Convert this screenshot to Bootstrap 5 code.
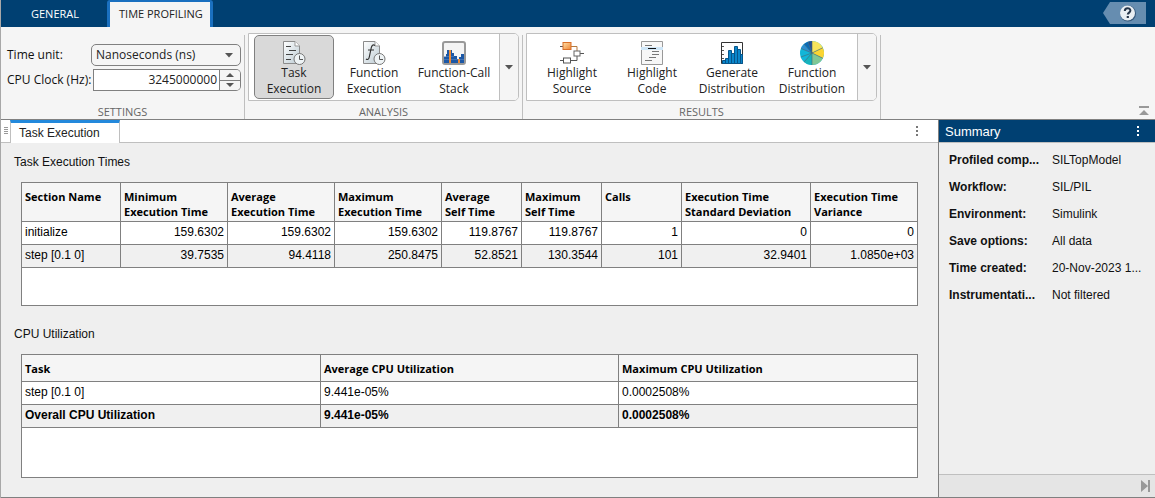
<!DOCTYPE html>
<html lang="en">
<head>
<meta charset="utf-8">
<meta name="viewport" content="width=device-width, initial-scale=1">
<title>Code Profile Analyzer</title>
<link rel="stylesheet" href="https://cdn.jsdelivr.net/npm/bootstrap@5.3.0/dist/css/bootstrap.min.css">
<style>
:root{--navy:#004072;--line:#808080;--soft:#bfbfbf;--ui:"Open Sans","Noto Sans",sans-serif;--doc:"Liberation Sans",Arial,sans-serif}
body{font:12px/16px var(--doc);color:#111;background:#efefef;border-left:1px solid #a8a8a8}
button{color:inherit}
.tabstrip{background:var(--navy);height:27px;font-family:var(--ui);font-size:11px}
.tabstrip .nav-link{color:#fff;padding:0 28px 0 30px;line-height:26px;border:0;border-radius:0}
.tabstrip .nav-link.active{background:#f5f5f5;color:#222;border:solid #1a70c0;border-width:2px 3px 0;padding:0 7px 0 9px;line-height:24px;height:27px;border-radius:3px 3px 0 0}
.ribbon{background:#f5f5f5;border-bottom:1px solid var(--line);font-family:var(--ui);font-size:12px}
.ribbon-group{border-right:1px solid var(--soft);margin-top:8px;height:84px}
.group-title{color:#666;font-size:11px;line-height:14px}
.settings{width:244px}
.settings label{width:84px;font-size:12px}
.settings-rows{padding:9px 3px 0 6px;gap:3px}
.unit{height:22px;border:1px solid var(--line);border-radius:5px;background:#f5f5f5;padding:0 4px;font-size:12px;line-height:20px;color:#222;appearance:none;width:100%}
.unit-wrap{width:150px;position:relative}
.unit-wrap svg{position:absolute;right:8px;top:9px;pointer-events:none}
.clock-wrap{width:148px;height:22px}
.clock{border:1px solid var(--line);padding:0 2px;text-align:right;font-size:12px;line-height:20px;color:#222;min-width:0;width:0;background:#fff}
.spin{width:21px;border:1px solid var(--line);border-left:0;border-radius:0 5px 5px 0;overflow:hidden}
.spin button{background:#f5f5f5;border:0;padding:0;flex:1 1 0;line-height:0}
.spin button+button{border-top:1px solid var(--line)}
.gallery{border:1px solid var(--soft);border-radius:0 5px 5px 0;background:#fff;height:68px;margin:-2px 3px 0;overflow:hidden}
.gallery-items{padding:1px 5px}
.tool{width:80px;border:1px solid transparent;border-radius:5px;background:none;padding:4px 0 0;line-height:16px;height:64px;color:#222}
.tool.pressed{background:#d9d9d9;border-color:var(--line)}
.tool svg{display:block;margin:0 auto}
.more{width:19px;border:0;border-left:1px solid var(--soft);background:#f5f5f5;padding:0}
.icon-btn{border:0;background:none;padding:0;line-height:0}
.doc-tabs{height:23px;background:#fff;border-bottom:1px solid var(--soft)}
.grip{width:9px}
.doc-tab{width:110px;border:0;border-right:1px solid var(--soft);border-left:1px solid var(--soft);border-top:3px solid #2389dc;background:#fff;text-align:left;padding:0 0 0 8px;height:23px;color:#222;line-height:19px}
.pane{padding:0 20px 19px 20px}
.pane h2{font-size:12px;line-height:16px;margin:0 0 0 -7px}
.pane h2.first{padding:11px 0 12px}
.pane h2.second{padding:20px 0 12px}
.grid-box{border:1px solid var(--line);background:#fff;min-height:124px}
.grid-box table{table-layout:fixed;border-collapse:separate;border-spacing:0;width:100%}
.grid-box th,.grid-box td{border-right:1px solid var(--line);border-bottom:1px solid var(--line);padding:0 3px;color:#000;white-space:nowrap}
.grid-box tr>:last-child{border-right:0}
.grid-box thead th{background:#f5f5f5;font:bold 11px/15px var(--ui);vertical-align:top;padding-top:6px;height:39px}
.grid-box .one-line th{height:27px}
.grid-box tbody td{height:23px;line-height:16px;padding-bottom:2px}
.grid-box .alt td{background:#f0f0f0}
.c-name{width:99px}.c-time{width:107px}.c-self{width:80px}.c-dev{width:129px}.c-var{width:106px}
.c-task{width:299px}.c-max{width:298px}
.summary{width:217px;border-left:1px solid var(--line)}
.summary-head{background:var(--navy);color:#fff;height:23px;border-bottom:1px solid var(--soft);font:13px/23px var(--doc);padding-left:6px}
.facts{padding:9px 10px;margin:0;display:grid;grid-template-columns:93px 1fr;column-gap:10px;row-gap:11px}
.status{height:23px;border-top:1px solid var(--soft);background:#e5e5e5}
.page-end{border-bottom:1px solid var(--line)}
</style>
</head>
<body class="d-flex flex-column min-vh-100">
<header>
  <nav class="tabstrip d-flex">
    <div class="nav align-items-end flex-nowrap">
      <a class="nav-link" href="#">GENERAL</a>
      <a class="nav-link active" href="#" aria-current="page">TIME PROFILING</a>
    </div>
    <button class="icon-btn ms-auto me-2" type="button" aria-label="Help">
      <svg width="44" height="27"><path d="M0 13 7 2H43V24H7Z" fill="#668db0"/><circle cx="25" cy="13.500" r="8" fill="#35577a"/><circle cx="24.500" cy="13" r="7.500" fill="#e9eef2"/><path d="M21.800 11c0-3.800 5.600-3.600 5.600-.4 0 2-2.600 2-2.600 4" fill="none" stroke="#26364a" stroke-width="2"/><rect x="23.700" y="16" width="2.200" height="2" fill="#26364a"/></svg>
    </button>
  </nav>
  <div class="ribbon d-flex">
    <section class="ribbon-group settings d-flex flex-column">
      <div class="settings-rows d-flex flex-column">
        <div class="d-flex align-items-center">
          <label for="unit">Time unit:</label>
          <div class="unit-wrap"><select id="unit" class="unit"><option>Nanoseconds (ns)</option></select>
          <svg width="8" height="5"><path d="M0 0h8L4 4.500z" fill="#555"/></svg></div>
        </div>
        <div class="d-flex align-items-center">
          <label for="clock" class="text-nowrap">CPU Clock (Hz):</label>
          <div class="clock-wrap d-flex ms-auto"><input id="clock" class="clock flex-grow-1" type="text" value="3245000000">
            <div class="spin d-flex flex-column flex-shrink-0"><button type="button" aria-label="Increase"><svg width="8" height="4"><path d="M0 4h8L4 0z" fill="#555"/></svg></button><button type="button" aria-label="Decrease"><svg width="8" height="4"><path d="M0 0h8L4 4z" fill="#555"/></svg></button></div>
          </div>
        </div>
      </div>
      <div class="group-title text-center mt-auto">SETTINGS</div>
    </section>
    <section class="ribbon-group d-flex flex-column">
      <div class="gallery d-flex">
        <div class="gallery-items d-flex">
          <button class="tool pressed" type="button">
            <svg width="24" height="24" viewBox="0 0 24 24"><defs><linearGradient id="paper" x2="1" y2="1"><stop stop-color="#fff"/><stop offset="1" stop-color="#bccbd3"/></linearGradient></defs><path d="M1.500.5H13L17.500 5V22.500h-16z" fill="url(#paper)" stroke="#8b8b8b"/><path d="M13 .5V5h4.500" fill="#fff" stroke="#999"/><path d="M4 5.500h5M7 9.500h7M4 13.500h7M4 18.500h5" stroke="#444" fill="none"/><circle cx="17.500" cy="18" r="5.500" fill="#eef3f5" stroke="#777"/><path d="M17.500 14.500V18.500H21" stroke="#555" fill="none"/></svg>Task<br>Execution</button>
          <button class="tool" type="button">
            <svg width="24" height="24" viewBox="0 0 24 24"><path d="M1.500.5H13L17.500 5V22.500h-16z" fill="url(#paper)" stroke="#8b8b8b"/><path d="M13 .5V5h4.500" fill="#fff" stroke="#999"/><path d="M13 4.500c-2-1.500-3.300 0-3.800 2.500L7.300 16c-.5 2.500-1.800 3-3.300 2M6 9h6" stroke="#333" stroke-width="1.200" fill="none"/><circle cx="17.500" cy="18" r="5.500" fill="#eef3f5" stroke="#777"/><path d="M17.500 14.500V18.500H21" stroke="#555" fill="none"/></svg>Function<br>Execution</button>
          <button class="tool" type="button">
            <svg width="24" height="24" viewBox="0 0 24 24"><rect x="1" y="1" width="22" height="22" rx="2" fill="#f4f4f4" stroke="#999" stroke-width="2"/><path d="M5 9h5v3h2v3h3v3h2v-2h2v-3h3v9H2v-6h2v-3h1z" fill="#1c58a6"/><path d="M2 15.500h10M2 18.500h20" stroke="#5b86bf" stroke-width=".6"/><path d="M7 9h2v13H7zM16 18h2v4h-2z" fill="#f08b34"/></svg>Function-Call<br>Stack</button>
        </div>
        <button class="more" type="button" aria-label="More analyses"><svg width="8" height="5"><path d="M0 0h8L4 4.500z" fill="#555"/></svg></button>
      </div>
      <div class="group-title text-center mt-auto">ANALYSIS</div>
    </section>
    <section class="ribbon-group d-flex flex-column">
      <div class="gallery d-flex">
        <div class="gallery-items d-flex">
          <button class="tool" type="button">
            <svg width="24" height="24" viewBox="0 0 24 24"><defs><linearGradient id="amber" x2="1" y2="1"><stop stop-color="#ffe0a8"/><stop offset="1" stop-color="#ee8433"/></linearGradient></defs><path d="M11 5.500h6V10" stroke="#b5793f" fill="none"/><path d="M0 5.500h3M0 19.500h3M11 19.500h6V15M20 12.500h4" stroke="#555" fill="none"/><rect x="3" y="1.500" width="8" height="7" fill="url(#amber)" stroke="#d9702a"/><rect x="14" y="10" width="6" height="5" fill="#fff" stroke="#666"/><rect x="3.500" y="17" width="7" height="5" fill="#fff" stroke="#555"/></svg>Highlight<br>Source</button>
          <button class="tool" type="button">
            <svg width="24" height="24" viewBox="0 0 24 24"><path d="M1.500.5h21v23h-21z" fill="#f7f7f7" stroke="#999"/><path d="M1 6h22v3H1z" fill="#cfe6f7"/><path d="M5 4.500h7M12 10.500h7M12 13.500h7M9 16.500h7M5 19.500h7" stroke="#777"/><path d="M8 7.500h8" stroke="#111"/></svg>Highlight<br>Code</button>
          <button class="tool" type="button">
            <svg width="24" height="24" viewBox="0 0 24 24"><path d="M1.500 1.500h21v21h-21z" fill="#fff" stroke="#333"/><path d="M2 5.500h2M2 9.500h2M2 13.500h2M2 17.500h2" stroke="#555"/><path d="M2.500 19.500h3v-2h3v-8h3v3h3v-7h3v3h3v5h2v9h-20z" fill="#0a86cb" stroke="#07558a"/><path d="M5.500 19v3M8.500 17v5M11.500 12v10M14.500 12v10M17.500 8v14M20.500 13v9" stroke="#07558a"/></svg>Generate<br>Distribution</button>
          <button class="tool" type="button">
            <svg width="24" height="24" viewBox="0 0 24 24"><circle cx="12" cy="12" r="12" fill="#12b6d8"/><path d="M12 12V0A12 12 0 0 1 22.800 6.800z" fill="#f7e45c"/><path d="M12 12 22.800 6.800A12 12 0 0 1 22.800 17.200z" fill="#fbd533"/><path d="M12 12 22.800 17.200A12 12 0 0 1 12 24z" fill="#80c795"/><path d="M12 12V24A12 12 0 0 1 4 21z" fill="#16b3bd"/><path d="M12 12 1 7.500A12 12 0 0 1 4 3z" fill="#2d8fd0"/><path d="M12 12 4 3A12 12 0 0 1 8 .7z" fill="#0b6ab5"/><path d="M12 12 8 .7A12 12 0 0 1 12 0z" fill="#244f94"/><path d="M12 0v24M12 12 22.800 6.800M12 12l10.800 5.200M12 12 4 21M12 12 .8 16M12 12 1 7.500M12 12 4 3M12 12 8 .7" stroke="#4b6670" stroke-width=".6"/></svg>Function<br>Distribution</button>
        </div>
        <button class="more" type="button" aria-label="More results"><svg width="8" height="5"><path d="M0 0h8L4 4.500z" fill="#555"/></svg></button>
      </div>
      <div class="group-title text-center mt-auto">RESULTS</div>
    </section>
    <button class="icon-btn ms-auto me-1 mb-1 align-self-end" type="button" aria-label="Collapse toolstrip"><svg width="14" height="9"><path d="M2 0h10v2H2zM2 9h10L7 4z" fill="#999"/></svg></button>
  </div>
</header>
<div class="d-flex flex-grow-1 page-end">
  <main class="flex-grow-1">
    <div class="doc-tabs d-flex align-items-start">
      <div class="grip"><svg width="9" height="20"><path d="M3 7.500h4M3 9.500h4M3 11.500h4M3 13.500h4" stroke="#999"/></svg></div>
      <button class="doc-tab" type="button">Task Execution</button>
      <button class="icon-btn ms-auto me-3" type="button" aria-label="Document options"><svg width="10" height="22"><path d="M4 6h2v2H4zM4 10h2v2H4zM4 14h2v2H4z" fill="#777"/></svg></button>
    </div>
    <div class="pane">
      <h2 class="first fw-normal">Task Execution Times</h2>
      <div class="grid-box">
        <table>
          <colgroup><col class="c-name"><col class="c-time"><col class="c-time"><col class="c-time"><col class="c-self"><col class="c-self"><col class="c-self"><col class="c-dev"><col class="c-var"></colgroup>
          <thead><tr><th>Section Name</th><th>Minimum<br>Execution Time</th><th>Average<br>Execution Time</th><th>Maximum<br>Execution Time</th><th>Average<br>Self Time</th><th>Maximum<br>Self Time</th><th>Calls</th><th>Execution Time<br>Standard Deviation</th><th>Execution Time<br>Variance</th></tr></thead>
          <tbody class="text-end">
            <tr><td class="text-start">initialize</td><td>159.6302</td><td>159.6302</td><td>159.6302</td><td>119.8767</td><td>119.8767</td><td>1</td><td>0</td><td>0</td></tr>
            <tr class="alt"><td class="text-start">step [0.1 0]</td><td>39.7535</td><td>94.4118</td><td>250.8475</td><td>52.8521</td><td>130.3544</td><td>101</td><td>32.9401</td><td>1.0850e+03</td></tr>
          </tbody>
        </table>
      </div>
      <h2 class="second fw-normal">CPU Utilization</h2>
      <div class="grid-box">
        <table>
          <colgroup><col class="c-task"><col class="c-max"><col class="c-max"></colgroup>
          <thead class="one-line"><tr><th>Task</th><th>Average CPU Utilization</th><th>Maximum CPU Utilization</th></tr></thead>
          <tbody>
            <tr><td>step [0.1 0]</td><td>9.441e-05%</td><td>0.0002508%</td></tr>
            <tr class="alt fw-bold"><td>Overall CPU Utilization</td><td>9.441e-05%</td><td>0.0002508%</td></tr>
          </tbody>
        </table>
      </div>
    </div>
  </main>
  <aside class="summary d-flex flex-column flex-shrink-0">
    <div class="summary-head d-flex justify-content-between">Summary
      <button class="icon-btn me-2" type="button" aria-label="Summary options"><svg width="18" height="22"><path d="M8 6h2v2H8zM8 10h2v2H8zM8 14h2v2H8z" fill="#fff"/></svg></button>
    </div>
    <dl class="facts">
      <dt>Profiled comp...</dt><dd class="m-0">SILTopModel</dd>
      <dt>Workflow:</dt><dd class="m-0">SIL/PIL</dd>
      <dt>Environment:</dt><dd class="m-0">Simulink</dd>
      <dt>Save options:</dt><dd class="m-0">All data</dd>
      <dt>Time created:</dt><dd class="m-0">20-Nov-2023 1...</dd>
      <dt>Instrumentati...</dt><dd class="m-0">Not filtered</dd>
    </dl>
    <div class="status d-flex align-items-center justify-content-end mt-auto pe-1">
      <button class="icon-btn" type="button" aria-label="Collapse panel"><svg width="11" height="12"><path d="M1 0 8 6 1 12zM8 0h2v12H8z" fill="#999"/></svg></button>
    </div>
  </aside>
</div>
<script src="https://cdn.jsdelivr.net/npm/bootstrap@5.3.0/dist/js/bootstrap.bundle.min.js"></script>
</body>
</html>
